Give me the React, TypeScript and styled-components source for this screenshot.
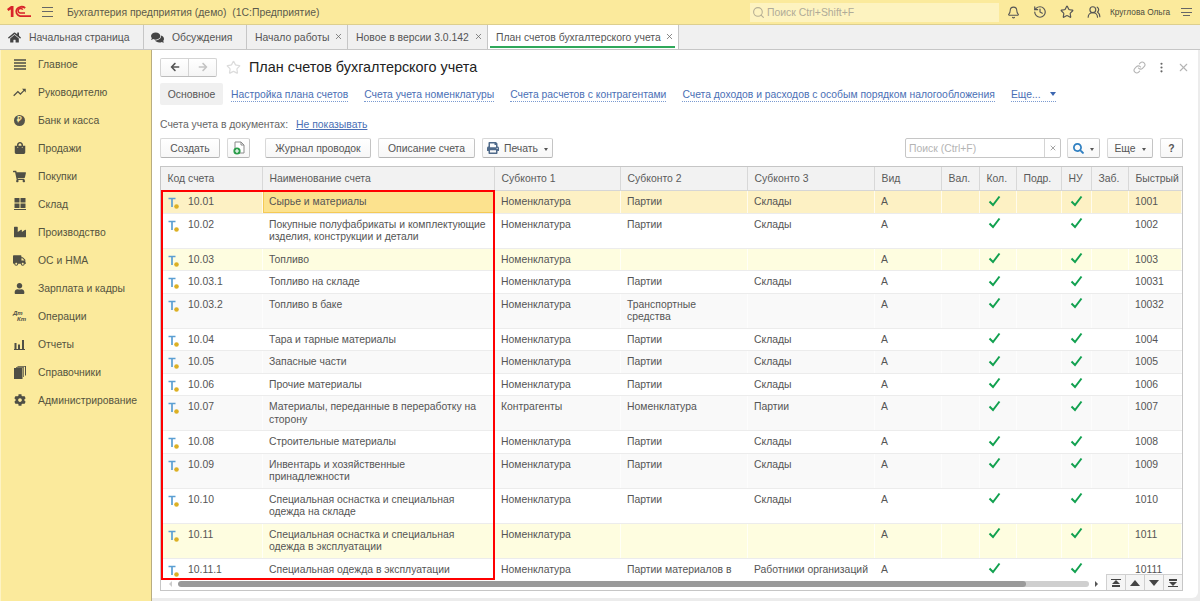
import React from "react";
import styled, { createGlobalStyle } from "styled-components";
import { FaHome, FaComments, FaArrowLeft, FaArrowRight, FaPrint, FaSearch, FaShoppingBag, FaShoppingCart, FaIndustry, FaTruck, FaUser, FaCog } from "react-icons/fa";
import { MdTrendingUp } from "react-icons/md";
import { Bell, History, Star, UsersRound, Link as ChainLink, EllipsisVertical, X, Search } from "lucide-react";

const Global = createGlobalStyle`
  html, body { margin: 0; padding: 0; width: 1200px; height: 601px; overflow: hidden; }
  body { font-family: "Liberation Sans", Arial, sans-serif; font-size: 10.4px; color: #4b4b4b; }
  * { box-sizing: border-box; }
`;

const Page = styled.div`
  width: 1200px; height: 601px; display: flex; flex-direction: column; background: #ececec;
`;
const TopBar = styled.header`
  height: 25px; flex: none; display: flex; align-items: center; background: #fbea9c;
  border-bottom: 1px solid #ddcf8e; padding: 0 9px 0 7px;
`;
const Logo = styled.svg` width: 24px; height: 14px; flex: none; `;
const Burger = styled.div`
  width: 11px; height: 10px; margin-left: 11px; flex: none;
  border-top: 1px solid #666; border-bottom: 1px solid #666; position: relative;
  &::after { content: ""; position: absolute; left: 0; right: 0; top: 3px; height: 1px; background: #666; }
`;
const AppTitle = styled.div` margin-left: 14px; width: 683px; flex: none; color: #5b5a4c; white-space: pre; `;
const GlobalSearch = styled.div`
  width: 249px; height: 19px; flex: none; background: #fdf3c0; display: flex; align-items: center; gap: 2px;
  padding-left: 2px; color: #b0ab98;
`;
const TopIcons = styled.div` display: flex; align-items: center; margin-left: 8px; gap: 13px; color: #555; `;
const UserName = styled.span` font-size: 8.3px; color: #4b4a3c; margin-left: -4px; white-space: nowrap; `;
const MenuLines = styled.div`
  width: 11px; height: 9px; margin-left: -2px; border-top: 1px solid #666; position: relative;
  &::before { content: ""; position: absolute; left: 0; right: 0; top: 3px; height: 1px; background: #666; }
  &::after { content: ""; position: absolute; left: 2px; right: 2px; top: 6px; height: 1px; background: #666; }
`;

const TabBar = styled.nav`
  height: 25px; flex: none; display: flex; background: #f0f0f0; border-bottom: 1px solid #c6c6c6;
`;
const Tab = styled.div<{ $w: number; $active?: boolean; $pad?: number }>`
  width: ${p => p.$w}px; flex: none; display: flex; align-items: center; position: relative;
  padding-left: ${p => p.$pad ?? 8}px; border-right: 1px solid #c6c6c6; color: #555; white-space: nowrap;
  background: ${p => (p.$active ? "#fff" : "transparent")};
  ${p => p.$active && `&::after { content: ""; position: absolute; left: 2px; right: 3px; bottom: 1px; height: 2px; background: #2fa85a; }`}
`;
const TabIcon = styled.span<{ $gap: number }>` display: inline-flex; margin-right: ${p => p.$gap}px; color: #444; `;
const TabClose = styled.span` position: absolute; right: 4px; top: 7px; display: inline-flex; color: #666; `;

const Main = styled.div` flex: 1; display: flex; min-height: 0; `;
const Sidebar = styled.aside`
  width: 152px; flex: none; background: #fbea9c; border-right: 1px solid #b9ad80; border-left: 1px solid #fdf3c4;
`;
const SideItem = styled.div`
  height: 28px; display: flex; align-items: center; color: #55543f;
`;
const SideIcon = styled.span`
  width: 37px; flex: none; display: flex; justify-content: center; color: #4f4f45;
`;
const CoinGlyph = styled.span`
  width: 11px; height: 11px; border-radius: 50%; background: #55544a; color: #fbea9c; font-size: 8px;
  display: flex; align-items: center; justify-content: center; font-weight: bold; line-height: 1;
`;
const DtKt = styled.span`
  width: 13px; font-size: 6px; line-height: 6px; color: #4f4f45; font-weight: bold; font-style: italic;
  display: flex; flex-direction: column;
  & > span:last-child { align-self: flex-end; }
`;

const Panel = styled.section`
  width: 1046px; height: 548px; flex: none; background: #fff; border-bottom-right-radius: 6px;
  padding: 8px 13px 0 8px; display: flex; flex-direction: column;
`;
const HeadRow = styled.div` height: 18px; display: flex; align-items: center; flex: none; `;
const NavGroup = styled.div`
  width: 57px; height: 19px; display: flex; border: 1px solid #d4d4d4; border-bottom-color: #bdbdbd; border-radius: 2px; flex: none;
  background: linear-gradient(#fff, #f5f5f5);
`;
const NavButton = styled.span<{ $dim?: boolean }>`
  flex: 1; display: flex; align-items: center; justify-content: center; color: ${p => (p.$dim ? "#c4c4c4" : "#555")};
  & + & { border-left: 1px solid #d4d4d4; }
`;
const FavStar = styled.span` display: inline-flex; margin-left: 9px; color: #dcdcdc; `;
const PageTitle = styled.h1` margin: 0 0 0 8px; font-size: 14.4px; font-weight: normal; color: #222; flex: 1; white-space: nowrap; `;
const HeadTools = styled.div` display: flex; align-items: center; color: #b4b4b4; margin-right: -5px; gap: 9px; `;

const LinkRow = styled.div` height: 22px; margin-top: 7px; display: flex; align-items: center; flex: none; `;
const ActiveLink = styled.span`
  width: 63px; height: 22px; background: #f0f0f0; border-radius: 2px; display: flex; align-items: center; justify-content: center; color: #555; margin-right: 8px;
`;
const FormLink = styled.span<{ $mr: number }>`
  color: #4a6fb5; border-bottom: 1px dotted #7a9ad0; margin-right: ${p => p.$mr}px; margin-top: 2px; font-size: 10.35px; line-height: 12px; white-space: nowrap;
`;
const EtcCaret = styled.span`
  display: inline-block; width: 0; height: 0; margin-left: 9px; vertical-align: 2px;
  border-left: 3.5px solid transparent; border-right: 3.5px solid transparent; border-top: 4px solid #3c66b0;
`;
const DocRow = styled.div` height: 14px; margin-top: 12px; display: flex; align-items: center; flex: none; color: #666; `;
const ShowLink = styled.span` color: #4a6fb5; text-decoration: underline; margin-left: 8px; `;

const Toolbar = styled.div` height: 20px; margin-top: 7px; display: flex; flex: none; `;
const Btn = styled.div<{ $w: number; $mr?: number }>`
  width: ${p => p.$w}px; margin-right: ${p => p.$mr ?? 7}px; height: 20px; flex: none; display: flex; align-items: center; justify-content: center; gap: 5px;
  border: 1px solid #d8d8d8; border-bottom-color: #b4b4b4; border-right-color: #c4c4c4; border-radius: 2px; color: #555;
  background: linear-gradient(#fff, #f7f7f7); white-space: nowrap;
`;
const Caret = styled.span`
  display: inline-block; width: 0; height: 0; margin-left: 1px; margin-top: 2px;
  border-left: 2.5px solid transparent; border-right: 2.5px solid transparent; border-top: 3px solid #555;
`;
const SearchBox = styled.div`
  width: 156px; height: 20px; margin-left: 345px; margin-right: 6px; flex: none; display: flex; border: 1px solid #c6c6c6; border-radius: 2px;
  color: #b4b4b4; align-items: center; padding-left: 3px;
`;
const SearchHint = styled.span` flex: 1; `;
const SearchClear = styled.span`
  width: 16px; height: 18px; border-left: 1px solid #d4d4d4; color: #777; display: flex; align-items: center; justify-content: center;
`;

const Table = styled.div`
  margin-top: 8px; width: 1023px; height: 425px; flex: none; border: 1px solid #c6c6c6; display: flex; flex-direction: column; position: relative; overflow: hidden;
`;
const COLS = "102px 232px 126px 127px 127px 67px 38px 37px 45px 30px 37px 53px";
const HeaderRow = styled.div`
  display: grid; grid-template-columns: ${COLS}; height: 24px; flex: none; background: #f2f2f2; border-bottom: 1px solid #d6d6d6;
`;
const HeadCell = styled.div`
  padding: 0 0 1px 6.5px; display: flex; align-items: center; color: #5a5a5a; border-right: 1px solid #d8d8d8; white-space: nowrap;
  &:last-child { border-right: 0; }
`;
const Body = styled.div` flex: 1; overflow: hidden; min-height: 0; `;
const rowBg = { plain: "#fff", zebra: "#f9f9f9", yellow: "#fefde0", selected: "#fdf1c4" };
const Row = styled.div<{ $kind: keyof typeof rowBg }>`
  display: grid; grid-template-columns: ${COLS}; background: ${p => rowBg[p.$kind]}; border-bottom: 1px solid #ececec; color: #555;
`;
const Cell = styled.div<{ $sel?: boolean }>`
  padding: 5.25px 6px 3.75px 6px; line-height: 12.5px; border-right: 1px solid rgba(255,255,255,.7); overflow: hidden;
  ${p => p.$sel && `background: #fce28e; box-shadow: inset 0 0 0 1px #f5ca55;`}
`;
const SingleLineCell = styled(Cell)` white-space: nowrap; `;
const CodeCell = styled(Cell)` display: flex; padding-left: 7px; gap: 8px; align-items: flex-start; `;
const TypeIcon = styled.svg` width: 12px; height: 13px; flex: none; margin: 1px 0 -3px; `;
const CheckCell = styled(Cell)` padding: 3.5px 0 0 7.5px; display: flex; justify-content: flex-start; `;
const CheckMark = styled.svg` width: 13px; height: 12px; `;

const RedFrame = styled.div`
  position: absolute; left: 0; top: 23px; width: 334px; height: 390px; border: 2.5px solid #f00; pointer-events: none;
`;
const ScrollRow = styled.div`
  height: 12px; flex: none; background: #fff; display: flex; align-items: center; padding-left: 8px; padding-right: 84px; gap: 6px; color: #999;
`;
const ScrollArrow = styled.span<{ $dir: "l" | "r"; $dark?: boolean }>`
  width: 0; height: 0; flex: none; border-top: 3px solid transparent; border-bottom: 3px solid transparent;
  ${p => p.$dir === "l" ? `border-right: 3px solid #ccc;` : `border-left: 3px solid #555;`}
`;
const ScrollTrack = styled.div` flex: 1; height: 6px; background: #cfcfcf; border-radius: 3px; overflow: hidden; `;
const ScrollThumb = styled.div` width: 93.1%; height: 100%; background: #9a9a9a; border-radius: 3px; `;
const Pager = styled.div`
  position: absolute; right: 0; bottom: 0; width: 76px; height: 16px; display: flex; background: #f5f5f5; border-top: 1px solid #d0d0d0; border-left: 1px solid #d0d0d0;
`;
const PagerBtn = styled.span`
  flex: 1; display: flex; align-items: center; justify-content: center; border-left: 1px solid #d0d0d0;
  &:first-child { border-left: 0; }
`;

const Check = () => (
  <CheckMark viewBox="0 0 13 12"><path d="M1.5 6.5 L5 10 L11.5 1.5" fill="none" stroke="#12a150" strokeWidth="2" /></CheckMark>
);
const TIcon = () => (
  <TypeIcon viewBox="0 0 12 13">
    <path d="M0.5 1.5 H7.5 M4 1.5 V10" stroke="#5b9fd3" strokeWidth="1.7" fill="none" />
    <circle cx="8.5" cy="9.5" r="2.3" fill="#dcb024" />
  </TypeIcon>
);

type R = { k: keyof typeof rowBg; code: string; name: string; s1: string; s2?: string; s3?: string; q: string; sel?: boolean };
const rows: R[] = [
  { k: "selected", code: "10.01", name: "Сырье и материалы", s1: "Номенклатура", s2: "Партии", s3: "Склады", q: "1001", sel: true },
  { k: "plain", code: "10.02", name: "Покупные полуфабрикаты и комплектующие изделия, конструкции и детали", s1: "Номенклатура", s2: "Партии", s3: "Склады", q: "1002" },
  { k: "yellow", code: "10.03", name: "Топливо", s1: "Номенклатура", q: "1003" },
  { k: "plain", code: "10.03.1", name: "Топливо на складе", s1: "Номенклатура", s2: "Партии", s3: "Склады", q: "10031" },
  { k: "zebra", code: "10.03.2", name: "Топливо в баке", s1: "Номенклатура", s2: "Транспортные средства", q: "10032" },
  { k: "plain", code: "10.04", name: "Тара и тарные материалы", s1: "Номенклатура", s2: "Партии", s3: "Склады", q: "1004" },
  { k: "zebra", code: "10.05", name: "Запасные части", s1: "Номенклатура", s2: "Партии", s3: "Склады", q: "1005" },
  { k: "plain", code: "10.06", name: "Прочие материалы", s1: "Номенклатура", s2: "Партии", s3: "Склады", q: "1006" },
  { k: "zebra", code: "10.07", name: "Материалы, переданные в переработку на сторону", s1: "Контрагенты", s2: "Номенклатура", s3: "Партии", q: "1007" },
  { k: "plain", code: "10.08", name: "Строительные материалы", s1: "Номенклатура", s2: "Партии", s3: "Склады", q: "1008" },
  { k: "zebra", code: "10.09", name: "Инвентарь и хозяйственные принадлежности", s1: "Номенклатура", s2: "Партии", s3: "Склады", q: "1009" },
  { k: "plain", code: "10.10", name: "Специальная оснастка и специальная одежда на складе", s1: "Номенклатура", s2: "Партии", s3: "Склады", q: "1010" },
  { k: "yellow", code: "10.11", name: "Специальная оснастка и специальная одежда в эксплуатации", s1: "Номенклатура", q: "1011" },
  { k: "plain", code: "10.11.1", name: "Специальная одежда в эксплуатации", s1: "Номенклатура", s2: "Партии материалов в эксплуатации", s3: "Работники организаций", q: "10111" },
];

const heads = ["Код счета", "Наименование счета", "Субконто 1", "Субконто 2", "Субконто 3", "Вид", "Вал.", "Кол.", "Подр.", "НУ", "Заб.", "Быстрый"];

const MainIcon = () => (
  <svg width="12" height="11" viewBox="0 0 12 11"><path d="M0 1h12M0 4h12M0 7h12M0 10h12" stroke="#4f4f45" strokeWidth="1.4" /></svg>
);
const StoreIcon = () => (
  <svg width="12" height="12" viewBox="0 0 12 12" fill="#4f4f45"><rect x="0.5" y="0" width="5" height="4.5" /><rect x="6.5" y="0" width="5" height="4.5" /><rect x="0.5" y="5.5" width="5" height="4.5" /><rect x="6.5" y="5.5" width="5" height="4.5" /><rect x="0" y="11" width="12" height="1" /></svg>
);
const ReportIcon = () => (
  <svg width="11" height="11" viewBox="0 0 11 11" fill="#4f4f45"><rect x="0.5" y="4" width="2" height="6" /><rect x="4" y="5.5" width="2" height="4.5" /><rect x="8" y="1" width="2" height="9" /><rect x="0" y="10" width="11" height="1" /></svg>
);
const BooksIcon = () => (
  <svg width="12" height="13" viewBox="0 0 12 13" fill="#4f4f45"><rect x="0" y="2" width="8.5" height="11" /><path d="M2 1.2 H10 V11 H9.3 V1.9 H2Z M3.5 0 H12 V9.5 H11 V0.8 H3.5Z" /></svg>
);

const sideItems: [React.ReactNode, string][] = [
  [<MainIcon />, "Главное"],
  [<MdTrendingUp size={15} />, "Руководителю"],
  [<CoinGlyph>₽</CoinGlyph>, "Банк и касса"],
  [<FaShoppingBag size={12} />, "Продажи"],
  [<FaShoppingCart size={13} />, "Покупки"],
  [<StoreIcon />, "Склад"],
  [<FaIndustry size={12} />, "Производство"],
  [<FaTruck size={13} />, "ОС и НМА"],
  [<FaUser size={11} />, "Зарплата и кадры"],
  [<DtKt><span>Дт</span><span>Кт</span></DtKt>, "Операции"],
  [<ReportIcon />, "Отчеты"],
  [<BooksIcon />, "Справочники"],
  [<FaCog size={12} />, "Администрирование"],
];

const PagerIcon = ({ d }: { d: string }) => (
  <svg width="10" height="8" viewBox="0 0 10 8"><path d={d} fill="#444" /></svg>
);

export default function App() {
  return (
    <Page>
      <Global />
      <TopBar>
        <Logo viewBox="0 0 24 14">
          <path d="M0 4 L4 1 H6.5 V12 H3.8 V4.6 L1.4 6Z" fill="#d8232a" />
          <path d="M18.2 3 A5.4 4.8 0 1 0 13.2 11.2 H24" fill="none" stroke="#d8232a" strokeWidth="1.8" />
          <path d="M15.8 4.6 A2.5 2.3 0 1 0 13.2 8 H18" fill="none" stroke="#d8232a" strokeWidth="1.5" />
        </Logo>
        <Burger />
        <AppTitle>Бухгалтерия предприятия (демо)  (1С:Предприятие)</AppTitle>
        <GlobalSearch>
          <Search size={13} color="#b5ae94" />
          Поиск Ctrl+Shift+F
        </GlobalSearch>
        <TopIcons>
          <Bell size={13} />
          <History size={14} />
          <Star size={14} />
          <UsersRound size={14} />
          <UserName>Круглова Ольга</UserName>
          <MenuLines />
        </TopIcons>
      </TopBar>
      <TabBar>
        <Tab $w={144} $pad={8}><TabIcon $gap={8}><FaHome size={13} /></TabIcon>Начальная страница</Tab>
        <Tab $w={103} $pad={7}><TabIcon $gap={8}><FaComments size={13} /></TabIcon>Обсуждения</Tab>
        <Tab $w={101}>Начало работы<TabClose><X size={9} /></TabClose></Tab>
        <Tab $w={140}>Новое в версии 3.0.142<TabClose><X size={9} /></TabClose></Tab>
        <Tab $w={191} $active>План счетов бухгалтерского учета<TabClose><X size={9} /></TabClose></Tab>
      </TabBar>
      <Main>
        <Sidebar>
          {sideItems.map(([icon, label]) => (
            <SideItem key={label}><SideIcon>{icon}</SideIcon>{label}</SideItem>
          ))}
        </Sidebar>
        <Panel>
          <HeadRow>
            <NavGroup>
              <NavButton><FaArrowLeft size={10} /></NavButton>
              <NavButton $dim><FaArrowRight size={10} /></NavButton>
            </NavGroup>
            <FavStar><Star size={15} /></FavStar>
            <PageTitle>План счетов бухгалтерского учета</PageTitle>
            <HeadTools>
              <ChainLink size={13} />
              <EllipsisVertical size={13} color="#666" />
              <X size={13} />
            </HeadTools>
          </HeadRow>
          <LinkRow>
            <ActiveLink>Основное</ActiveLink>
            <FormLink $mr={16}>Настройка плана счетов</FormLink>
            <FormLink $mr={16}>Счета учета номенклатуры</FormLink>
            <FormLink $mr={16}>Счета расчетов с контрагентами</FormLink>
            <FormLink $mr={16}>Счета доходов и расходов с особым порядком налогообложения</FormLink>
            <FormLink $mr={0}>Еще...<EtcCaret /></FormLink>
          </LinkRow>
          <DocRow>Счета учета в документах:<ShowLink>Не показывать</ShowLink></DocRow>
          <Toolbar>
            <Btn $w={60}>Создать</Btn>
            <Btn $w={23} $mr={15}>
              <svg width="14" height="14" viewBox="0 0 14 14">
                <path d="M3 1 H9 L12 4 V12 H3Z" fill="#fff" stroke="#8a8a8a" />
                <path d="M9 1 V4 H12" fill="none" stroke="#8a8a8a" />
                <circle cx="5" cy="10" r="3.6" fill="#2a9d4a" />
                <path d="M5 8 V12 M3 10 H7" stroke="#fff" strokeWidth="1.2" />
              </svg>
            </Btn>
            <Btn $w={106}>Журнал проводок</Btn>
            <Btn $w={97}>Описание счета</Btn>
            <Btn $w={71}><FaPrint size={12} color="#4f6a8a" />Печать<Caret /></Btn>
            <SearchBox>
              <SearchHint>Поиск (Ctrl+F)</SearchHint>
              <SearchClear><X size={8} /></SearchClear>
            </SearchBox>
            <Btn $w={33}><FaSearch size={11} color="#2f7fc1" /><Caret /></Btn>
            <Btn $w={46}>Еще<Caret /></Btn>
            <Btn $w={23} $mr={0}><b>?</b></Btn>
          </Toolbar>
          <Table>
            <HeaderRow>
              {heads.map(h => <HeadCell key={h}>{h}</HeadCell>)}
            </HeaderRow>
            <Body>
              {rows.map(r => (
                <Row key={r.code} $kind={r.k}>
                  <CodeCell><TIcon />{r.code}</CodeCell>
                  <Cell $sel={r.sel}>{r.name}</Cell>
                  <Cell>{r.s1}</Cell>
                  <Cell>{r.s2}</Cell>
                  <SingleLineCell>{r.s3}</SingleLineCell>
                  <Cell>А</Cell>
                  <Cell />
                  <CheckCell><Check /></CheckCell>
                  <Cell />
                  <CheckCell><Check /></CheckCell>
                  <Cell />
                  <Cell>{r.q}</Cell>
                </Row>
              ))}
            </Body>
            <ScrollRow>
              <ScrollArrow $dir="l" />
              <ScrollTrack><ScrollThumb /></ScrollTrack>
              <ScrollArrow $dir="r" />
            </ScrollRow>
            <Pager>
              <PagerBtn><PagerIcon d="M0 0H10V1H0Z M5 1 L9 5H1Z M1 6H9V8H1Z" /></PagerBtn>
              <PagerBtn><PagerIcon d="M5 1 L10 7H0Z" /></PagerBtn>
              <PagerBtn><PagerIcon d="M0 1H10L5 7Z" /></PagerBtn>
              <PagerBtn><PagerIcon d="M1 0H9V2H1Z M1 3H9L5 7Z M0 7H10V8H0Z" /></PagerBtn>
            </Pager>
            <RedFrame />
          </Table>
        </Panel>
      </Main>
    </Page>
  );
}
